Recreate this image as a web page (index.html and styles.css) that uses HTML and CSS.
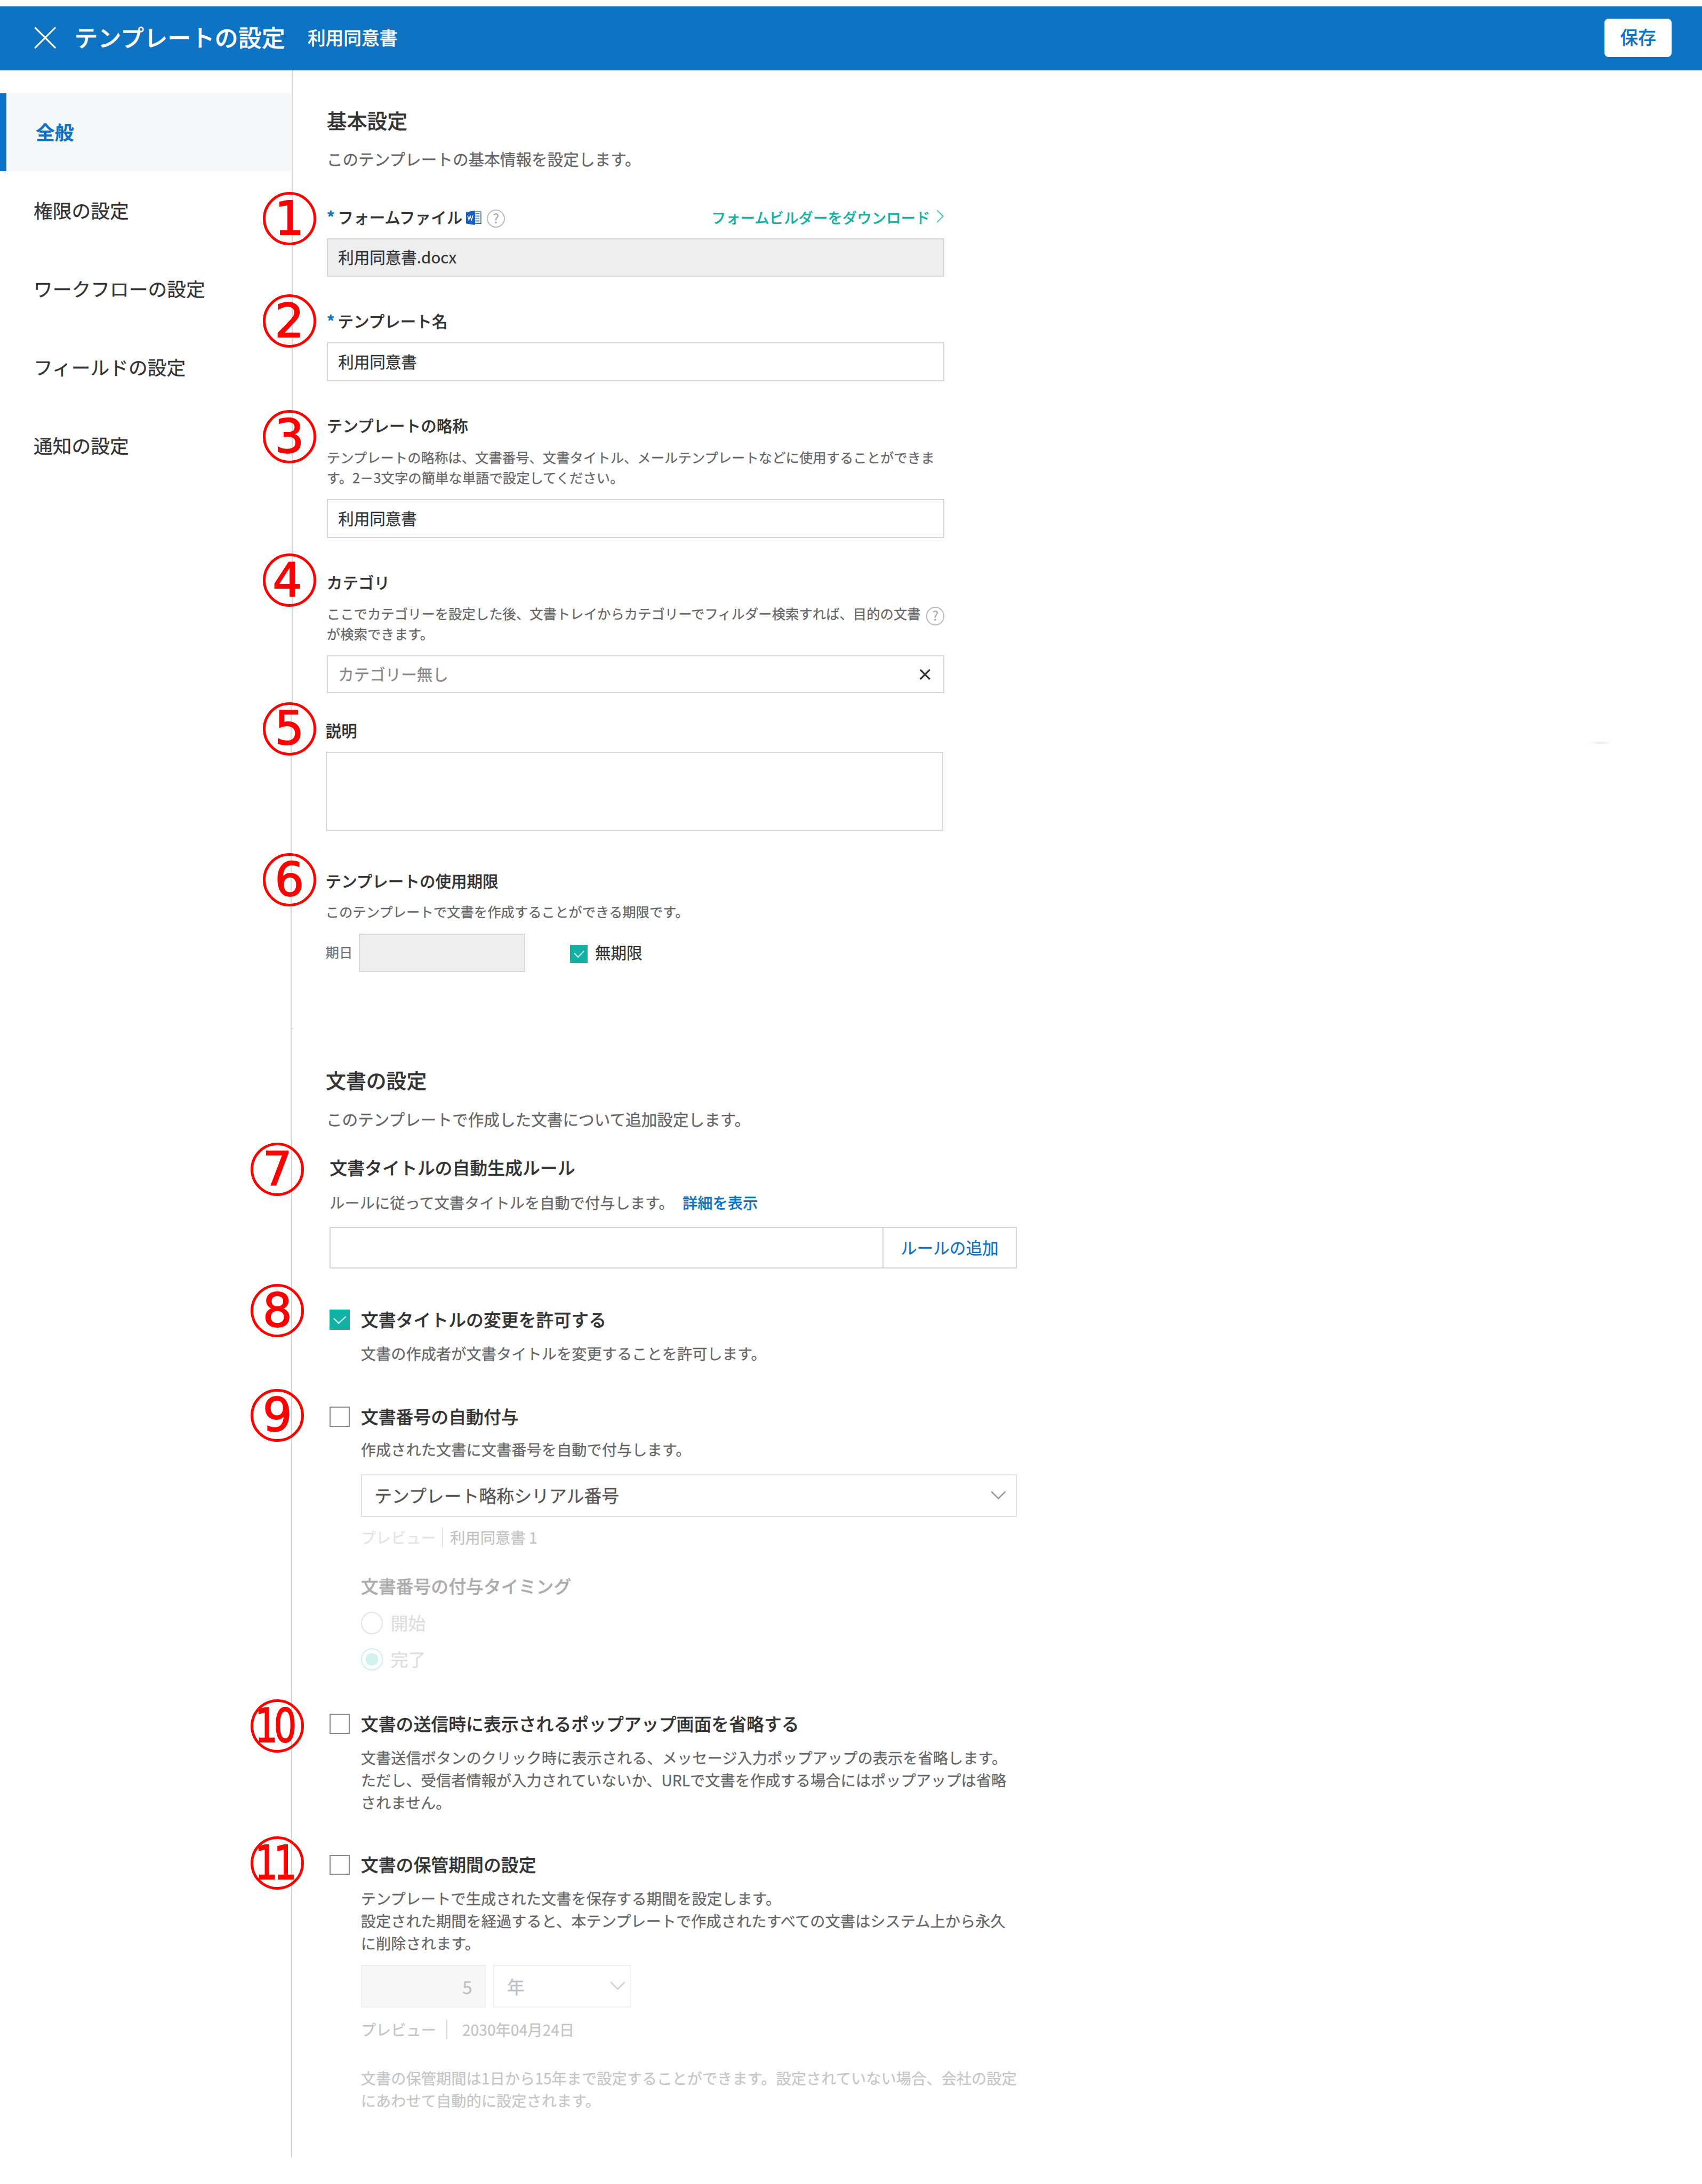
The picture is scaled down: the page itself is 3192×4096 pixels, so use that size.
FILE: index.html
```html
<!DOCTYPE html>
<html lang="ja">
<head>
<meta charset="utf-8">
<title>テンプレートの設定</title>
<link rel="stylesheet" href="styles.css">
</head>
<body>
<div class="page">
  <header class="topbar">
    <svg class="close" viewBox="0 0 46 46"><path d="M1.5 1.5 44.5 44.5M44.5 1.5 1.5 44.5" fill="none" stroke="#fff" stroke-width="3.4"/></svg>
    <h1 class="title">テンプレートの設定</h1>
    <span class="subtitle">利用同意書</span>
    <button class="save">保存</button>
  </header>

  <div class="body">
    <nav class="sidebar">
      <a class="nav-item active">全般</a>
      <a class="nav-item">権限の設定</a>
      <a class="nav-item">ワークフローの設定</a>
      <a class="nav-item">フィールドの設定</a>
      <a class="nav-item">通知の設定</a>
    </nav>
    <div class="rail">
      <i class="rail-top"></i>
      <i class="rail-mid"></i>
      <i class="rail-end"></i>
    </div>

    <main class="content">
      <section class="basic">
        <h2>基本設定</h2>
        <p class="lead">このテンプレートの基本情報を設定します。</p>

        <div class="label file-label">
          <b class="req">*</b><span>フォームファイル</span>
          <svg class="word" viewBox="0 0 32 30"><path d="M18 2.500H31V27H18z" fill="#fff" stroke="#1b5fc0" stroke-width="1.600"/><path d="M19 6h9M19 9.500h9M19 13h9M19 16.500h9M19 20h9M19 23.500h9" stroke="#4d86d6" stroke-width="1.400"/><path d="M0 3 18.500 0V30L0 27z" fill="#1a5fc1"/><path d="m3.500 10.500 2.400 9 2.800-8.500 2.800 8.500 2.900-9.500" fill="none" stroke="#fff" stroke-width="1.600"/></svg>
          <span class="help">?</span>
          <a class="download">フォームビルダーをダウンロード<svg viewBox="0 0 16 28"><path d="M1.500 1.500 14 14 1.500 26.500" fill="none" stroke="#3fbdb3" stroke-width="2"/></svg></a>
        </div>
        <div class="input disabled">利用同意書.docx</div>

        <div class="label name-label"><b class="req">*</b><span>テンプレート名</span></div>
        <div class="input">利用同意書</div>

        <div class="label short-label">テンプレートの略称</div>
        <p class="hint">テンプレートの略称は、文書番号、文書タイトル、メールテンプレートなどに使用することができま<br>す。2－3文字の簡単な単語で設定してください。</p>
        <div class="input">利用同意書</div>

        <div class="label cat-label">カテゴリ</div>
        <div class="hint-row">
          <p class="hint">ここでカテゴリーを設定した後、文書トレイからカテゴリーでフィルダー検索すれば、目的の文書<br>が検索できます。</p>
          <span class="help">?</span>
        </div>
        <div class="input placeholder">カテゴリー無し<svg class="clear" viewBox="0 0 24 22"><path d="M2 1 22 21M22 1 2 21" fill="none" stroke="#333" stroke-width="3.600"/></svg></div>

        <div class="label desc-label">説明</div>
        <div class="textarea"></div>

        <div class="label term-label">テンプレートの使用期限</div>
        <p class="hint term-hint">このテンプレートで文書を作成することができる期限です。</p>
        <div class="term-row">
          <span class="term-name">期日</span>
          <div class="term-date"></div>
          <span class="check small on"><svg viewBox="0 0 42 42"><path d="M10 19 19 28.500 33 14" fill="none" stroke="#bdf0ea" stroke-width="3"/></svg></span>
          <span class="term-text">無期限</span>
        </div>
      </section>

      <section class="docs">
        <h2>文書の設定</h2>
        <p class="lead">このテンプレートで作成した文書について追加設定します。</p>

        <div class="rule">
          <h3>文書タイトルの自動生成ルール</h3>
          <p class="note">ルールに従って文書タイトルを自動で付与します。<a class="more">詳細を表示</a></p>
          <div class="rule-box"><div class="rule-value"></div><button class="rule-add">ルールの追加</button></div>
        </div>

        <div class="option o-title">
          <span class="check on"><svg viewBox="0 0 42 42"><path d="M9 18.500 19 28.500 34 14.500" fill="none" stroke="#bdf0ea" stroke-width="2.800"/></svg></span>
          <div class="option-body">
            <h3>文書タイトルの変更を許可する</h3>
            <p class="note">文書の作成者が文書タイトルを変更することを許可します。</p>
          </div>
        </div>

        <div class="option o-number">
          <span class="check"></span>
          <div class="option-body">
            <h3>文書番号の自動付与</h3>
            <p class="note">作成された文書に文書番号を自動で付与します。</p>
            <div class="select">テンプレート略称シリアル番号<svg class="chev" viewBox="0 0 32 18"><path d="M1.500 1.500 16 16 30.500 1.500" fill="none" stroke="#999" stroke-width="3"/></svg></div>
            <div class="preview faint"><span class="key">プレビュー</span><span class="val">利用同意書 1</span></div>
            <h3 class="timing">文書番号の付与タイミング</h3>
            <div class="radio"><i></i>開始</div>
            <div class="radio picked"><i></i>完了</div>
          </div>
        </div>

        <div class="option o-popup">
          <span class="check"></span>
          <div class="option-body">
            <h3>文書の送信時に表示されるポップアップ画面を省略する</h3>
            <p class="note">文書送信ボタンのクリック時に表示される、メッセージ入力ポップアップの表示を省略します。<br>ただし、受信者情報が入力されていないか、URLで文書を作成する場合にはポップアップは省略<br>されません。</p>
          </div>
        </div>

        <div class="option o-keep">
          <span class="check"></span>
          <div class="option-body">
            <h3>文書の保管期間の設定</h3>
            <p class="note">テンプレートで生成された文書を保存する期間を設定します。<br>設定された期間を経過すると、本テンプレートで作成されたすべての文書はシステム上から永久<br>に削除されます。</p>
            <div class="period">
              <div class="period-num">5</div>
              <div class="period-unit">年<svg class="chev" viewBox="0 0 32 18"><path d="M1.500 1.500 16 16 30.500 1.500" fill="none" stroke="#d0d0d0" stroke-width="3"/></svg></div>
            </div>
            <div class="preview"><span class="key">プレビュー</span><span class="val">2030年04月24日</span></div>
            <p class="note limit">文書の保管期間は1日から15年まで設定することができます。設定されていない場合、会社の設定<br>にあわせて自動的に設定されます。</p>
          </div>
        </div>
      </section>
    </main>
  </div>

  <!-- numbered callouts laid over the form -->
  <span class="mark m1"><b>1</b></span>
  <span class="mark m2"><b>2</b></span>
  <span class="mark m3"><b>3</b></span>
  <span class="mark m4"><b>4</b></span>
  <span class="mark m5"><b>5</b></span>
  <span class="mark m6"><b>6</b></span>
  <span class="mark m7"><b>7</b></span>
  <span class="mark m8"><b>8</b></span>
  <span class="mark m9"><b>9</b></span>
  <span class="mark wide m10"><b>10</b></span>
  <span class="mark wide m11"><b>11</b></span>
  <span class="smudge"></span>
  <span class="tick"></span>
</div>
</body>
</html>
```
FILE: styles.css
```css
/* 1rem is ten design pixels */
html { font-size: 9.009px; }
* { box-sizing: border-box; }
body {
  margin: 0;
  background: #fefefe;
  color: #333;
  font-family: "Noto Sans CJK JP", sans-serif;
  white-space: nowrap;
  -webkit-text-stroke: .3px;
}
h1, h2, h3, p { margin: 0; }
button { border: 0; padding: 0; background: none; font-family: inherit; -webkit-text-stroke: inherit; }
svg { display: block; flex: none; }

.page { position: relative; width: 3192px; height: 4096px; overflow: hidden; padding-top: 1.37rem; }

/* top bar */
.topbar {
  display: flex;
  align-items: center;
  height: 13.23rem;
  padding: 0 6.3rem 0 7.1rem;
  background: #0f73c4;
  color: #fff;
}
.close { width: 4.6rem; height: 4.6rem; margin-top: -.2rem; }
.title { margin: -.5rem 0 0 3.75rem; font-size: 4.9rem; font-weight: 500; line-height: 1.4; }
.subtitle { margin: -.5rem auto 0 4.65rem; font-size: 3.74rem; font-weight: 500; }
.save {
  width: 14rem;
  height: 8rem;
  margin-top: -.3rem;
  padding-bottom: .3rem;
  border-radius: .9rem;
  background: #fff;
  color: #0f73c4;
  font-size: 3.74rem;
  font-weight: 500;
  line-height: 1;
}

.body { display: flex; align-items: flex-start; }

/* left navigation */
.sidebar { width: 60.6rem; padding-top: 4.87rem; }
.nav-item {
  display: flex;
  align-items: center;
  height: 16.32rem;
  padding: 0 0 .6rem 7rem;
  font-size: 3.97rem;
}
.nav-item.active {
  height: 16.2rem;
  margin-bottom: .12rem;
  padding: 0 0 .4rem 6.1rem;
  border-left: 1.34rem solid #0f73c4;
  background: #f5f7f9;
  color: #0f73c4;
  font-weight: 700;
}
.rail { display: flex; flex-direction: column; width: .4rem; }
.rail i { width: 2px; background: #d6d6d6; }
.rail-top { height: 132.5rem; margin-left: .1rem; }
.rail-mid { height: 90.1rem; margin-left: -.15rem; }
.rail-end { height: 211.9rem; }

/* content column */
.content { padding: 7.8rem 0 0 7.03rem; }
h2 { font-size: 4.2rem; font-weight: 500; line-height: 5rem; }
.lead { margin-top: 3.65rem; font-size: 3.29rem; line-height: 4rem; color: #666; }
.label { display: flex; height: 4rem; font-size: 3.28rem; font-weight: 500; line-height: 4rem; }
.req { width: 2.3rem; color: #0f73c4; font-weight: 700; }
.basic { width: 128.6rem; }

.file-label { margin-top: 8.1rem; }
.word { width: 3.2rem; height: 3rem; margin: .7rem 0 0 .8rem; }
.help {
  width: 3.8rem;
  height: 3.8rem;
  flex: none;
  border: 2px solid #bbb;
  border-radius: 50%;
  color: #aaa;
  font-size: 2.7rem;
  font-weight: 400;
  line-height: 3.2rem;
  text-align: center;
}
.file-label .help { margin: .5rem 0 0 1.1rem; }
.download { display: flex; margin-left: auto; color: #16b1a5; font-size: 3.045rem; }
.download svg { width: 1.6rem; height: 2.8rem; margin: .5rem .1rem 0 1.3rem; }

.input {
  display: flex;
  align-items: center;
  height: 8.07rem;
  margin-top: 2.43rem;
  padding: 0 2.6rem .3rem 2.15rem;
  border: 2px solid #d8d8d8;
  font-size: 3.28rem;
}
.input.disabled { background: #eee; }
.input.placeholder { height: 7.92rem; color: #888; }
.clear { width: 2.4rem; height: 2.2rem; margin: .3rem 0 0 auto; }
.name-label, .short-label { margin-top: 7.23rem; }
.hint { margin-top: 2.57rem; font-size: 2.815rem; line-height: 4.15rem; color: #666; }
.cat-label { margin-top: 7.29rem; }
.hint-row { display: flex; justify-content: space-between; }
.hint-row .hint { margin-top: 2.26rem; line-height: 4.24rem; }
.hint-row .help { margin-top: 3.1rem; }
.desc-label { margin: 5.69rem 0 0 -.25rem; }
.textarea { height: 16.5rem; margin: 2.43rem .25rem 0 -.25rem; border: 2px solid #d8d8d8; }
.term-label { margin: 8.37rem 0 0 -.25rem; }
.term-hint { margin: 2.35rem 0 0 -.25rem; }
.term-row { display: flex; align-items: center; height: 8.05rem; margin: 2.5rem 0 0 -.25rem; }
.term-name { width: 6.95rem; margin-top: -.4rem; color: #6b7378; font-size: 2.815rem; }
.term-date { width: 34.6rem; height: 8.05rem; border: 2px solid #d8d8d8; background: #eee; }
.term-row .check { margin-left: 9.35rem; margin-top: .5rem; }
.term-text { margin: -.4rem 0 0 1.5rem; font-size: 3.28rem; }

.check { width: 4.2rem; height: 4.2rem; flex: none; border: 2px solid #8a8a8a; background: #fff; }
.check.on { border: 0; background: #13b0a4; }
.check.small { width: 3.7rem; height: 3.8rem; }
.check svg { width: 100%; height: 100%; }

/* document settings */
.docs { width: 143.8rem; margin: 19.8rem 0 0 -.2rem; }
.docs .lead { margin-top: 3.76rem; margin-left: .1rem; }
.rule { margin: 6.04rem 0 0 .8rem; }
h3 { font-size: 3.65rem; font-weight: 500; line-height: 4rem; }
.note { font-size: 3.137rem; line-height: 4rem; color: #666; }
.rule .note { margin-top: 3.28rem; }
.more { margin-left: 1.8rem; color: #0f73c4; font-weight: 500; }
.rule-box { display: flex; height: 8.75rem; margin-top: 3.12rem; border: 2px solid #d6d6d6; }
.rule-value { flex: 1; }
.rule-add { width: 27.7rem; border-left: 2px solid #d6d6d6; padding-bottom: .3rem; color: #0f73c4; font-size: 3.4rem; }

.option { display: flex; padding-left: .8rem; }
.option-body { flex: 1; padding-left: 2.3rem; }
.option h3 { margin-top: -.05rem; }
.o-title { margin-top: 8.5rem; }
.o-title .note { margin-top: 3.2rem; }
.o-number { margin-top: 9.1rem; }
.o-number .note { margin-top: 2.85rem; }
.select {
  display: flex;
  align-items: center;
  justify-content: space-between;
  height: 8.9rem;
  margin-top: 3.2rem;
  padding: 0 2rem .2rem 2.6rem;
  border: 2px solid #e2e2e2;
  color: #555;
  font-size: 3.65rem;
}
.chev { width: 3.2rem; height: 1.8rem; }
.preview { display: flex; margin-top: 2.6rem; font-size: 3.137rem; line-height: 4rem; color: #c4c4c4; }
.preview .key { width: 18rem; border-right: 2px solid #d6d6d6; }
.preview .val { padding-left: 3.1rem; }
.preview.faint { margin-top: 2.3rem; color: #c2c2c2; }
.preview.faint .key { width: 17.1rem; color: #e4e4e4; border-color: #e4e4e4; }
.preview.faint .val { padding-left: 1.5rem; }
.option h3.timing { margin-top: 6.1rem; color: #acacac; }
.radio { display: flex; align-items: center; height: 4.6rem; margin-top: 3.4rem; color: #dedede; font-size: 3.65rem; line-height: 1; }
.radio i { width: 4.6rem; height: 4.6rem; margin-right: 1.6rem; border: 2px solid #e4e4e4; border-radius: 50%; }
.radio.picked { margin-top: 2.95rem; }
.radio.picked i { border-color: #cdf0ed; background: radial-gradient(circle, #d3f1ee 1.27rem, transparent 1.35rem); }
.o-popup { margin-top: 9.05rem; }
.o-popup .note { margin-top: 2.8rem; line-height: 4.67rem; }
.o-keep { margin-top: 8.6rem; }
.o-keep .note { margin-top: 2.8rem; line-height: 4.66rem; }
.period { display: flex; margin-top: 2.2rem; gap: 1.5rem; color: #c0c0c0; font-size: 3.65rem; }
.period-num, .period-unit { display: flex; align-items: center; height: 8.85rem; border: 2px solid #f0f0f0; }
.period-num { width: 26rem; justify-content: flex-end; padding-right: 2.6rem; background: #f7f7f7; }
.period-unit { width: 28.8rem; justify-content: space-between; padding: 0 1rem .2rem 2.7rem; }
.o-keep .limit { margin-top: 5.75rem; line-height: 4.6rem; color: #c6c6c6; }

/* callouts */
.mark {
  position: absolute;
  left: 54.7rem;
  display: flex;
  align-items: center;
  justify-content: center;
  width: 11.1rem;
  height: 11.1rem;
  border: .56rem solid #f00;
  border-radius: 50%;
  color: #f00;
  font: 9.6rem/1 "DejaVu Sans", sans-serif;
}
.mark b { font-weight: 400; -webkit-text-stroke: .2rem #f00; }
.wide b { display: block; transform: scaleX(.78); letter-spacing: -1.05rem; margin-right: 1.4rem; }
.m1 { top: 40rem; }
.m2 { top: 61.25rem; }
.m3 { top: 85.4rem; }
.m4 { top: 115.25rem; }
.m4 b { margin-right: .9rem; }
.m5 { top: 146.15rem; }
.m6 { top: 177.65rem; }
.m7, .m8, .m9, .m10, .m11 { left: 52.2rem; }
.m7 { top: 237.9rem; }
.m8 { top: 267.3rem; }
.m9 { top: 289.1rem; }
.m10 { top: 353.8rem; }
.m11 { top: 382.3rem; }
.smudge { position: absolute; left: 331rem; top: 154.4rem; width: 4.7rem; height: .4rem; background: linear-gradient(90deg, transparent, #ebebeb 40%, #efefef 60%, transparent); }
.tick { position: absolute; left: 60.6rem; top: 214rem; width: .45rem; height: 2px; background: #dcdcdc; }
```
